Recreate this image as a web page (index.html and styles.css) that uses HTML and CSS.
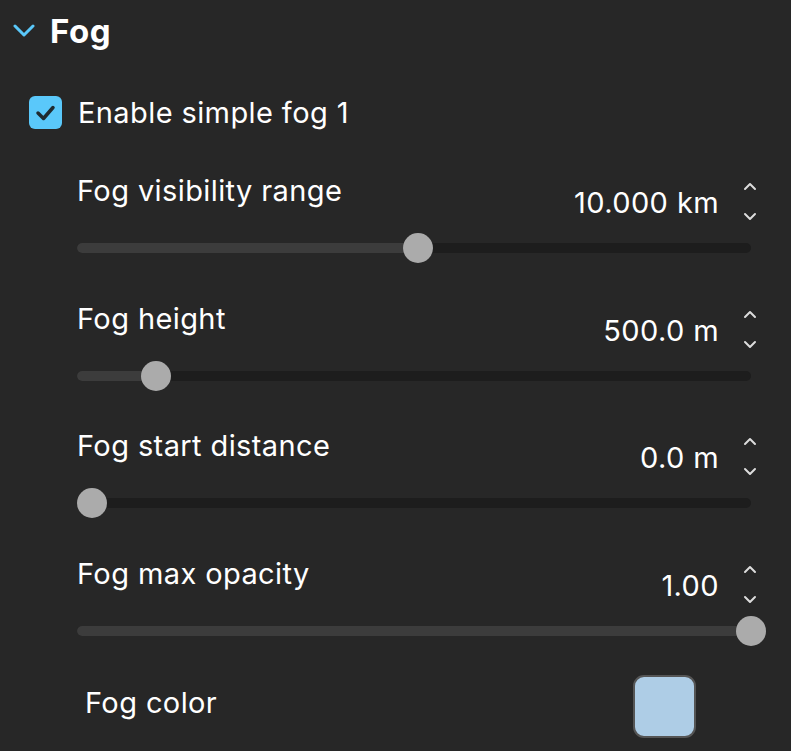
FILE: index.html
```html
<!DOCTYPE html>
<html>
<head>
<meta charset="utf-8">
<link rel="stylesheet" href="styles.css">
</head>
<body>
<div class="panel">
  <div class="section-head">
    <svg class="chevron" width="22" height="14" viewBox="0 0 22 14"><polyline points="2,2 11,11 20,2" fill="none" stroke="#5ac8fa" stroke-width="3" stroke-linecap="round" stroke-linejoin="round"/></svg>
    <h2 class="section-title">Fog</h2>
  </div>
  <div class="check-row">
    <span class="checkbox"><svg width="33" height="33" viewBox="0 0 33 33"><polyline points="9,17 14.5,22.5 24,11.5" fill="none" stroke="#1f2a30" stroke-width="3.5" stroke-linecap="round" stroke-linejoin="round"/></svg></span>
    <span class="check-label">Enable simple fog 1</span>
  </div>
  <div class="props">
    <div class="prop">
      <div class="prop-head">
        <span class="prop-label">Fog visibility range</span>
        <div class="value-group"><span class="value">10.000 km</span><svg class="spinner" width="14" height="46" viewBox="0 0 14 46"><polyline points="2,14 7,9 12,14" /><polyline points="2,39 7,44 12,39" /></svg></div>
      </div>
      <div class="slider"><div class="fill" style="width:341px"></div><div class="thumb" style="left:326px"></div></div>
    </div>
    <div class="prop">
      <div class="prop-head">
        <span class="prop-label">Fog height</span>
        <div class="value-group"><span class="value">500.0 m</span><svg class="spinner" width="14" height="46" viewBox="0 0 14 46"><polyline points="2,14 7,9 12,14" /><polyline points="2,39 7,44 12,39" /></svg></div>
      </div>
      <div class="slider"><div class="fill" style="width:79px"></div><div class="thumb" style="left:64px"></div></div>
    </div>
    <div class="prop">
      <div class="prop-head">
        <span class="prop-label">Fog start distance</span>
        <div class="value-group"><span class="value">0.0 m</span><svg class="spinner" width="14" height="46" viewBox="0 0 14 46"><polyline points="2,14 7,9 12,14" /><polyline points="2,39 7,44 12,39" /></svg></div>
      </div>
      <div class="slider"><div class="fill" style="width:14px"></div><div class="thumb" style="left:0px"></div></div>
    </div>
    <div class="prop">
      <div class="prop-head">
        <span class="prop-label">Fog max opacity</span>
        <div class="value-group"><span class="value">1.00</span><svg class="spinner" width="14" height="46" viewBox="0 0 14 46"><polyline points="2,14 7,9 12,14" /><polyline points="2,39 7,44 12,39" /></svg></div>
      </div>
      <div class="slider"><div class="fill" style="width:674px"></div><div class="thumb" style="left:659px"></div></div>
    </div>
    <div class="color-row">
      <span class="color-label">Fog color</span>
      <span class="swatch"></span>
    </div>
  </div>
</div>
</body>
</html>
```
FILE: styles.css
```css
html, body {
  margin: 0;
  padding: 0;
  background: #272727;
}
body {
  width: 791px;
  height: 751px;
  overflow: hidden;
  font-family: "Inter", "Noto Sans", sans-serif;
  color: #ffffff;
}
.panel {
  display: flex;
  flex-direction: column;
}
.section-head {
  display: flex;
  align-items: center;
  height: 40px;
  margin-top: 11px;
  padding-left: 13px;
}
.chevron {
  display: block;
  margin-right: 15px;
}
.section-title {
  margin: 0;
  font-size: 33px;
  font-weight: 700;
  letter-spacing: 0.6px;
  line-height: 40px;
}
.check-row {
  display: flex;
  align-items: center;
  margin-top: 45px;
  padding-left: 29px;
  height: 33px;
}
.checkbox {
  width: 33px;
  height: 33px;
  border-radius: 6px;
  background: #5ac8fa;
  display: block;
  flex: none;
}
.checkbox svg {
  display: block;
}
.check-label {
  margin-left: 16px;
  font-size: 29px;
  letter-spacing: 0.4px;
  line-height: 32px;
}
.props {
  display: flex;
  flex-direction: column;
  padding-left: 77px;
  padding-right: 34px;
  margin-top: 46px;
}
.prop {
  display: flex;
  flex-direction: column;
  height: 127.5px;
}
.prop-head {
  display: flex;
  justify-content: space-between;
  align-items: flex-start;
  height: 32px;
}
.prop-label {
  font-size: 29px;
  letter-spacing: 0.4px;
  line-height: 32px;
}
.value-group {
  display: flex;
  align-items: flex-start;
}
.value {
  font-size: 29px;
  letter-spacing: 0.4px;
  line-height: 32px;
  padding-top: 12px;
  margin-right: 24px;
}
.spinner {
  display: block;
}
.spinner polyline {
  fill: none;
  stroke: #dcdcdc;
  stroke-width: 2;
  stroke-linecap: round;
  stroke-linejoin: round;
}
.slider {
  position: relative;
  margin-top: 36px;
  margin-right: 6px;
  height: 10px;
  border-radius: 5px;
  background: #1d1d1d;
}
.fill {
  position: absolute;
  left: 0;
  top: 0;
  height: 10px;
  border-radius: 5px;
  background: #3c3c3c;
}
.thumb {
  position: absolute;
  top: -10px;
  width: 30px;
  height: 30px;
  border-radius: 50%;
  background: #ababab;
}
.color-row {
  display: flex;
  align-items: center;
  justify-content: space-between;
  margin-top: -11px;
  margin-right: 61px;
  height: 64px;
}
.color-label {
  margin-left: 8px;
  margin-bottom: 6px;
  font-size: 29px;
  letter-spacing: 0.4px;
  line-height: 32px;
}
.swatch {
  width: 59px;
  height: 59px;
  border: 2.5px solid #555555;
  border-radius: 11px;
  background: #aecde6;
}
```
